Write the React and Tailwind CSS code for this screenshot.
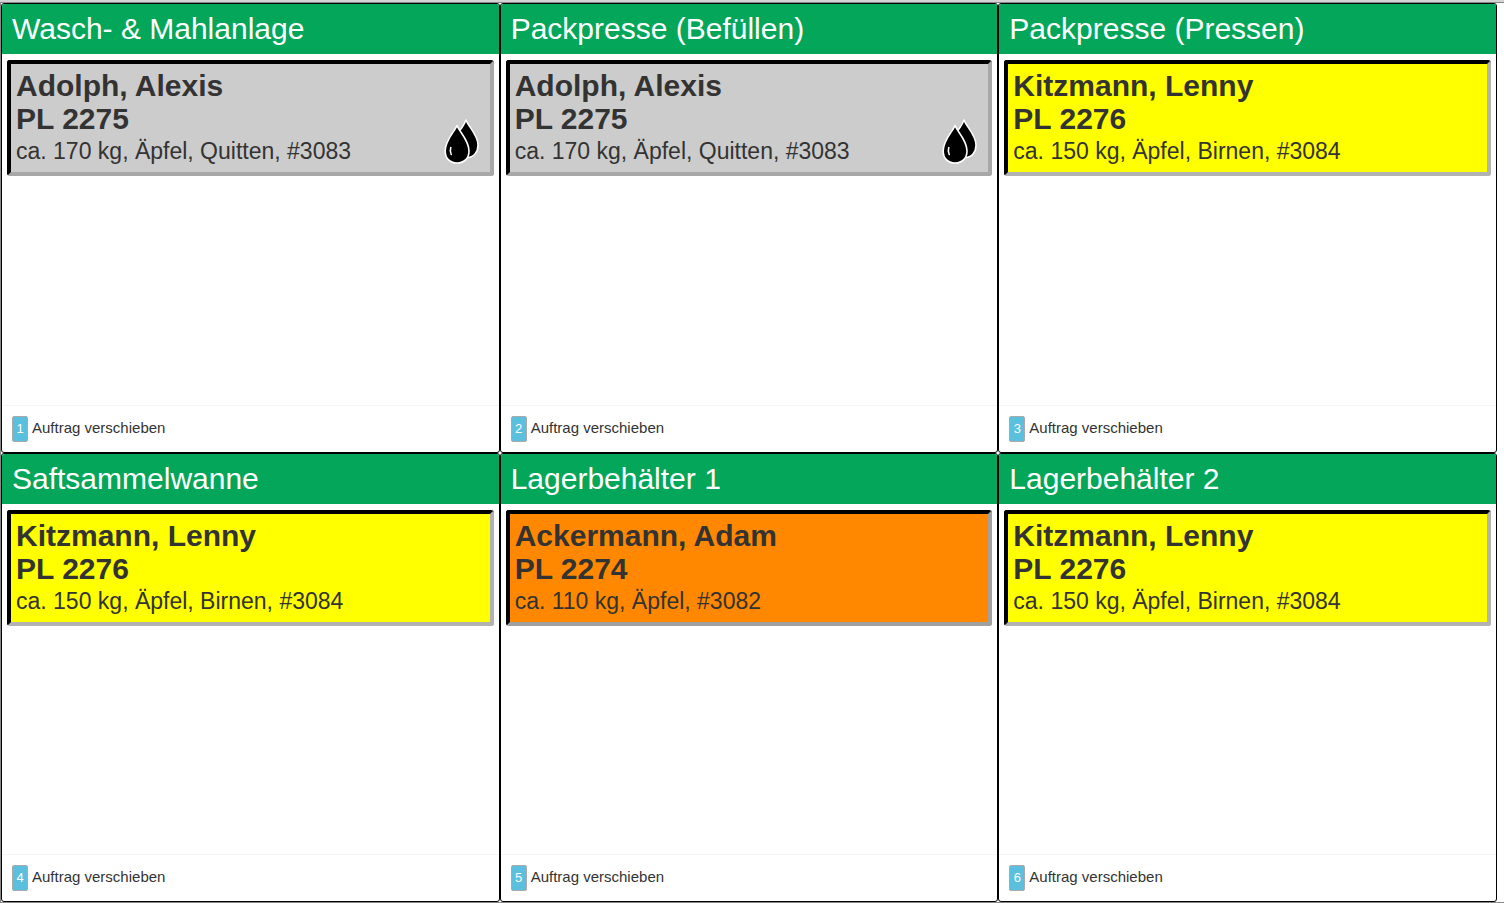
const stations = [
    { id: 1, title: 'Wasch- & Mahlanlage', order: 'adolph' },
    { id: 2, title: 'Packpresse (Befüllen)', order: 'adolph' },
    { id: 3, title: 'Packpresse (Pressen)', order: 'kitzmann' },
    { id: 4, title: 'Saftsammelwanne', order: 'kitzmann' },
    { id: 5, title: 'Lagerbehälter 1', order: 'ackermann' },
    { id: 6, title: 'Lagerbehälter 2', order: 'kitzmann' },
];

const orders = {
    adolph: {
        name: 'Adolph, Alexis',
        number: 'PL 2275',
        details: 'ca. 170 kg, Äpfel, Quitten, #3083',
        color: 'bg-[#cccccc] border-r-[#a8a8a8] border-b-[#a8a8a8]',
        juice: true,
    },
    kitzmann: {
        name: 'Kitzmann, Lenny',
        number: 'PL 2276',
        details: 'ca. 150 kg, Äpfel, Birnen, #3084',
        color: 'bg-[#ffff00] border-r-[#b2b2b2] border-b-[#b2b2b2]',
    },
    ackermann: {
        name: 'Ackermann, Adam',
        number: 'PL 2274',
        details: 'ca. 110 kg, Äpfel, #3082',
        color: 'bg-[#ff8800] border-r-[#a0a0a0] border-b-[#a0a0a0]',
    },
};

function DropsIcon() {
    return (
        <svg viewBox="0 0 36 50" className="w-9 h-[50px] shrink-0" aria-hidden="true">
            <g fill="#000" stroke="#fff" strokeWidth="1.6" strokeLinejoin="round">
                <path d="M22 2C24.5 9 34 17 34 27C34 34 30 39 23.500 39.500L12 16.500C17 12 20 7 22 2Z" />
                <path d="M13 7.500C15.500 14 25 22 25 33C25 40 20.500 45 13 45C5.500 45 1.200 40 1.200 33C1.200 22 10.500 14 13 7.500Z" />
            </g>
            <path d="M6.800 29.500C6 32 6.200 34.500 7.200 36.500" fill="none" stroke="#fff" strokeWidth="1.6" strokeLinecap="round" />
        </svg>
    );
}

function OrderCard({ order }) {
    return (
        <div className={`flex items-end justify-between rounded-[3px] border-4 border-t-black border-l-black pl-[5px] pr-[10px] pt-[5px] pb-1 ${order.color}`}>
            <div>
                <div className="text-[30px] leading-[33px] font-bold">{order.name}</div>
                <div className="text-[30px] leading-[33px] font-bold">{order.number}</div>
                <div className="text-[23px] leading-[33px]">{order.details}</div>
            </div>
            {order.juice && <DropsIcon />}
        </div>
    );
}

function Station({ station }) {
    return (
        <section className="flex flex-col rounded-[3px] border border-black bg-white overflow-hidden">
            <h2 className="bg-[#04a65a] px-[10px] text-[30px] leading-[50px] text-white">{station.title}</h2>
            <div className="grow px-[5px] py-[6px]">
                <OrderCard order={orders[station.order]} />
            </div>
            <footer className="flex border-t border-[#f4f4f4] p-[10px]">
                <button type="button" className="flex items-center gap-1 text-[15px] leading-[24px] cursor-pointer">
                    <span className="flex h-[26px] w-4 items-center justify-center rounded-[2px] border border-[#aaaaaa] bg-[#5bc0de] text-[13px] text-white">
                        {station.id}
                    </span>
                    <span className="pb-[2px]">Auftrag verschieben</span>
                </button>
            </footer>
        </section>
    );
}

export default function App() {
    return (
        <div className="flex min-h-screen flex-col bg-white font-['Liberation_Sans',Arial,sans-serif] text-[#333333]">
            <div className="h-[3px] border-b border-[#888888] bg-[#d4d4d4]" />
            <main className="grid grow auto-rows-fr grid-cols-3 border-b border-l border-[#888888] pr-[7px]">
                {stations.map((station) => (
                    <Station key={station.id} station={station} />
                ))}
            </main>
        </div>
    );
}
